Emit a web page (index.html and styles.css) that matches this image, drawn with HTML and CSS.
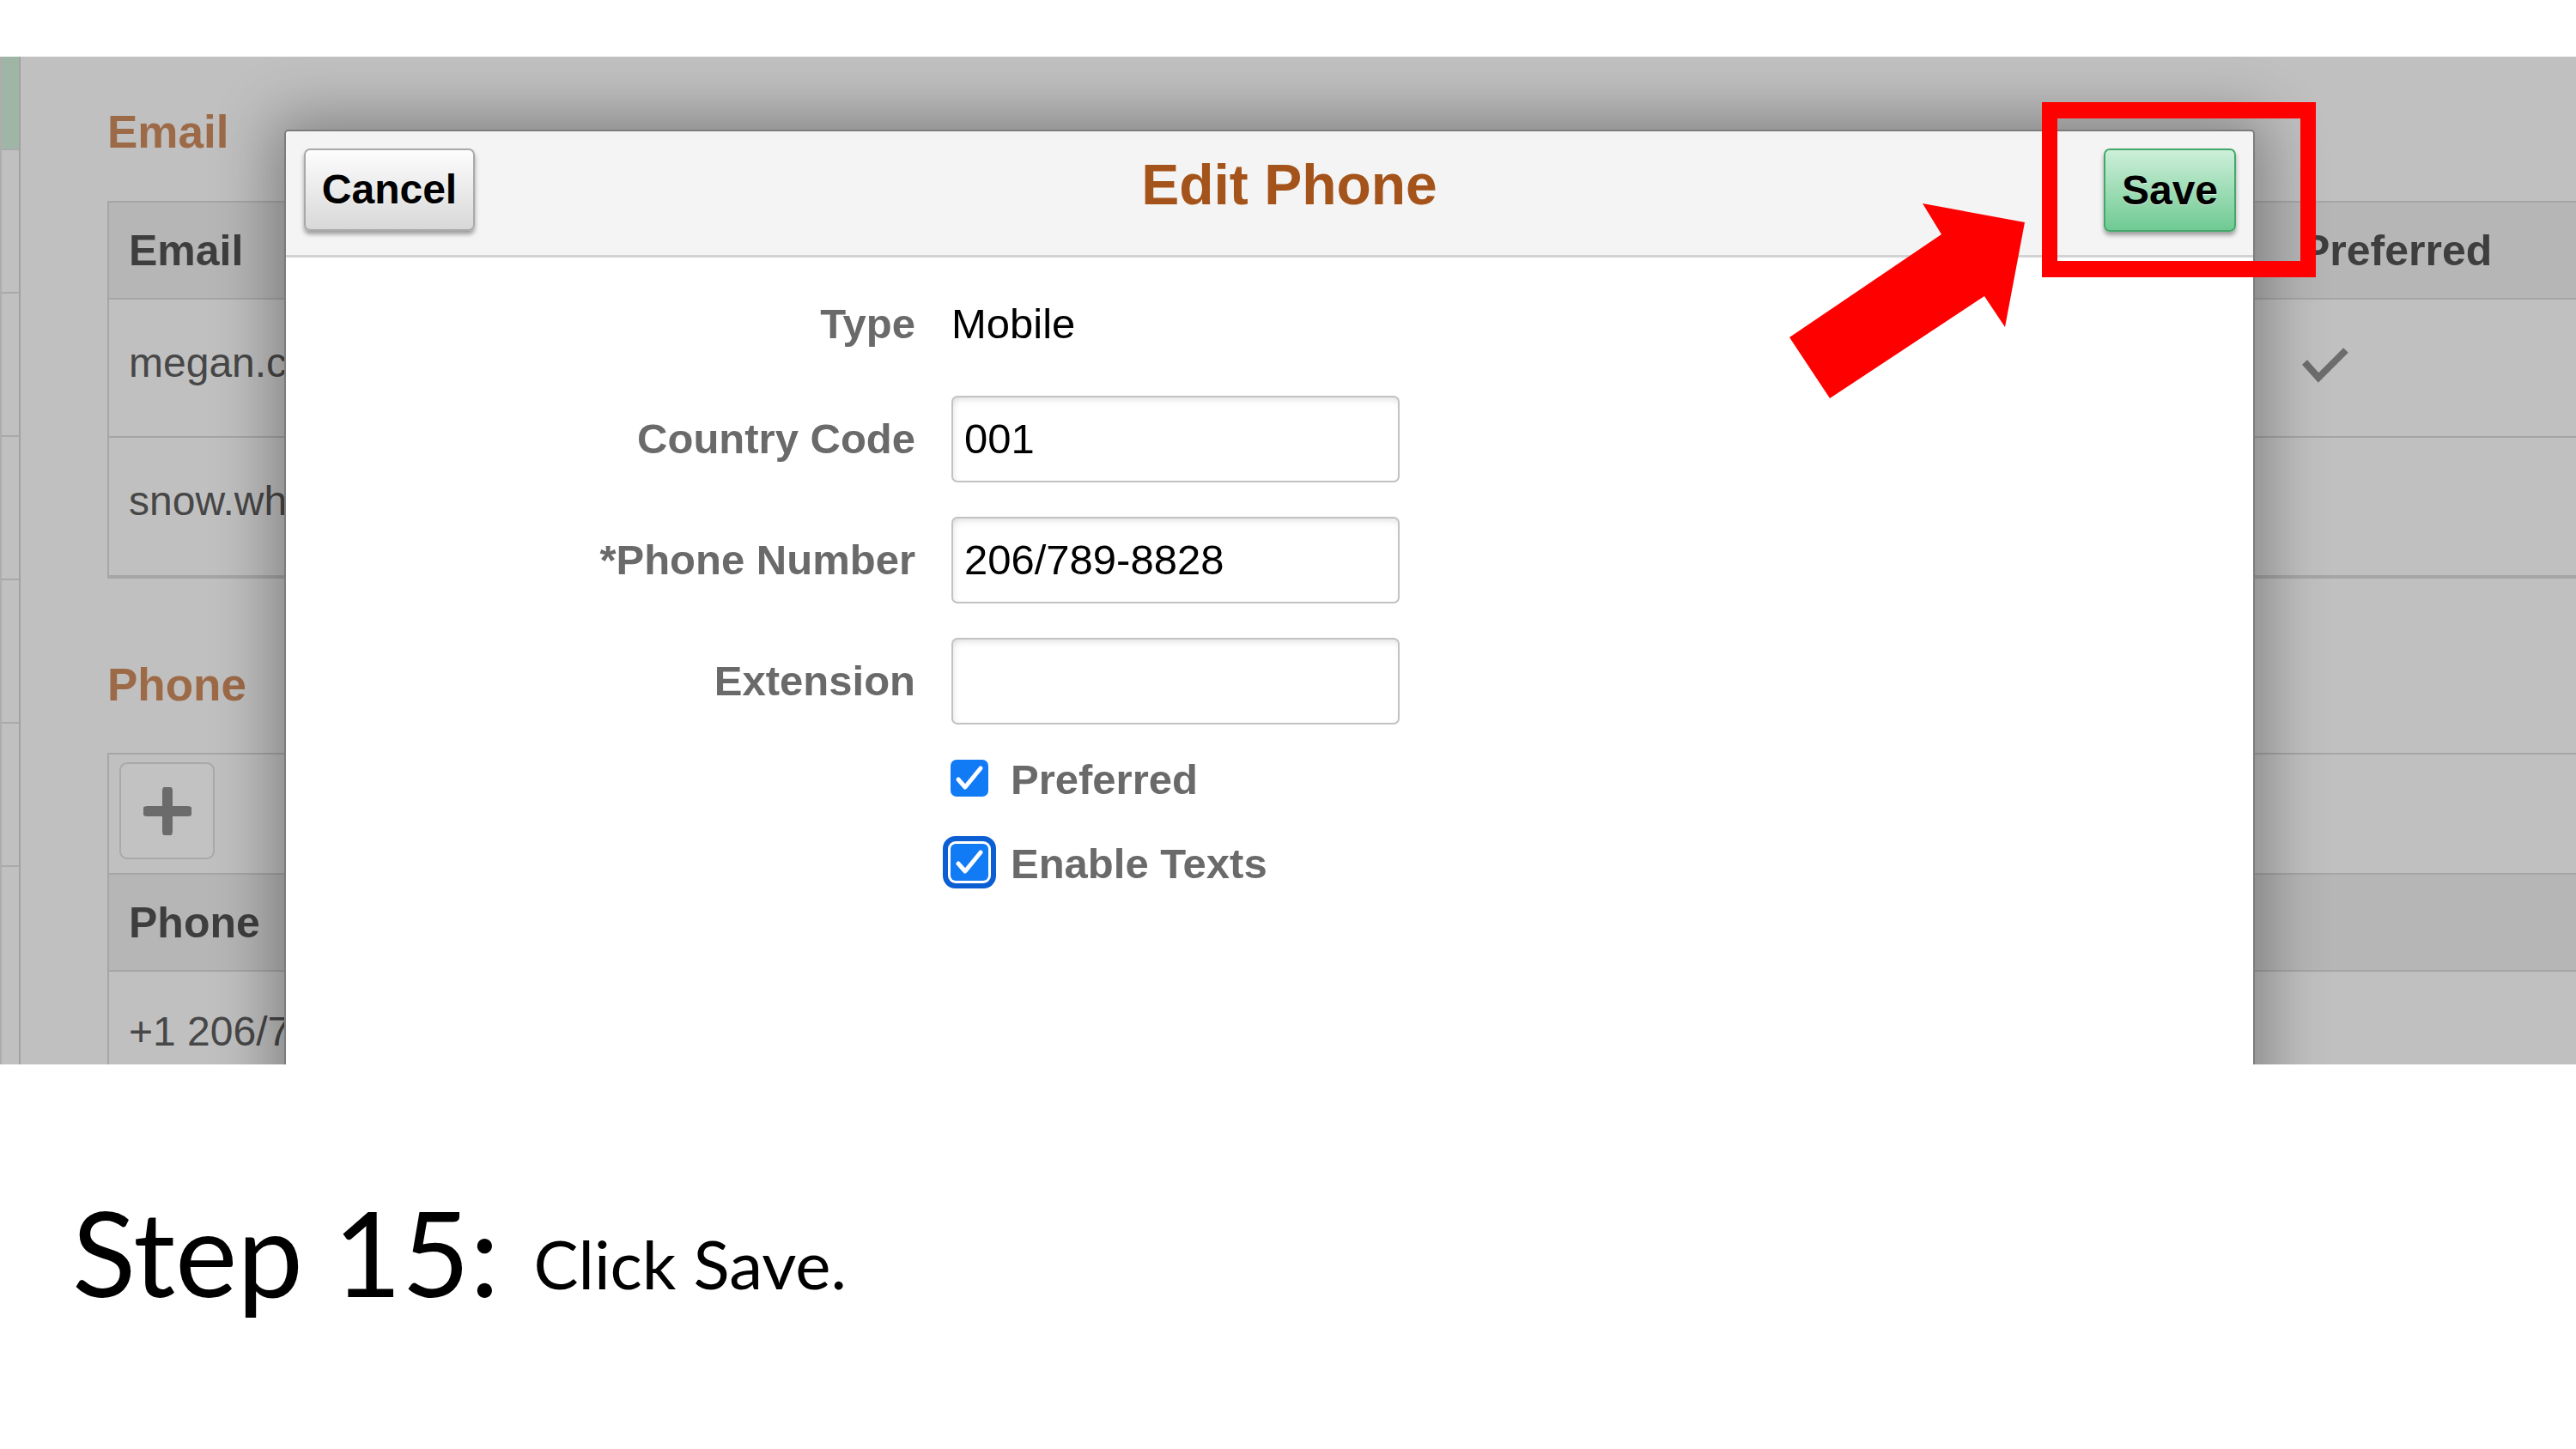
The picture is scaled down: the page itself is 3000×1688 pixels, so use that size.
FILE: index.html
```html
<!DOCTYPE html>
<html lang="en">
<head>
<meta charset="utf-8">
<title>Step 15: Click Save.</title>
<link rel="stylesheet" href="styles.css">
</head>
<body>
<div class="slide">
  <div class="shot">
    <div class="page">
      <div class="nav">
        <div class="nav-cell nav-active"></div>
        <div class="nav-cell"></div>
        <div class="nav-cell"></div>
        <div class="nav-cell"></div>
        <div class="nav-cell"></div>
        <div class="nav-cell"></div>
      </div>
      <div class="content">
        <h2 class="sec-title">Email</h2>
        <div class="table email-table">
          <div class="tr th"><div class="td c1">Email</div><div class="td cpref">Preferred</div></div>
          <div class="tr row"><div class="td c1">megan.cooper@example.com</div><div class="td cpref"><svg class="pref-check" width="54" height="42" viewBox="0 0 54 42"><polyline points="3,18 19,36 51,4" fill="none" stroke="#6d6d6d" stroke-width="8"/></svg></div></div>
          <div class="tr row"><div class="td c1">snow.white@example.com</div><div class="td cpref"></div></div>
        </div>
        <h2 class="sec-title phone-title">Phone</h2>
        <div class="table phone-table">
          <div class="tr toolbar">
            <div class="add-btn"><svg width="56" height="56" viewBox="0 0 56 56"><path d="M28 4 V52 M4 28 H52" stroke="#6b6b6b" stroke-width="12" stroke-linecap="round"/></svg></div>
          </div>
          <div class="tr th"><div class="td c1">Phone</div></div>
          <div class="tr row row-last"><div class="td c1">+1 206/789-8828</div></div>
        </div>
      </div>
    </div>

    <div class="modal">
      <div class="modal-head">
        <button class="btn btn-cancel">Cancel</button>
        <h1 class="modal-title">Edit Phone</h1>
        <button class="btn btn-save">Save</button>
      </div>
      <div class="modal-body">
        <div class="frow frow-type">
          <div class="flabel">Type</div>
          <div class="fvalue">Mobile</div>
        </div>
        <div class="frow frow-input frow-cc">
          <div class="flabel">Country Code</div>
          <div class="finput">001</div>
        </div>
        <div class="frow frow-input frow-gap">
          <div class="flabel">*Phone Number</div>
          <div class="finput">206/789-8828</div>
        </div>
        <div class="frow frow-input frow-gap">
          <div class="flabel">Extension</div>
          <div class="finput"></div>
        </div>
        <div class="frow frow-check frow-check1">
          <div class="flabel"></div>
          <div class="fcheck">
            <span class="cbox"><svg width="44" height="43" viewBox="0 0 44 43"><polyline points="9,23 17,32 35,10" fill="none" stroke="#fff" stroke-width="5" stroke-linecap="round" stroke-linejoin="round"/></svg></span>
            <span class="clabel">Preferred</span>
          </div>
        </div>
        <div class="frow frow-check frow-check2">
          <div class="flabel"></div>
          <div class="fcheck">
            <span class="cbox cbox-focus"><svg width="44" height="43" viewBox="0 0 44 43"><polyline points="9,23 17,32 35,10" fill="none" stroke="#fff" stroke-width="5" stroke-linecap="round" stroke-linejoin="round"/></svg></span>
            <span class="clabel">Enable Texts</span>
          </div>
        </div>
      </div>
    </div>

    <div class="callout-box"></div>
    <svg class="callout-arrow" width="300" height="250" viewBox="2070 160 300 250">
      <polygon points="2358,193 2335,315 2311,279 2131,398 2084,327 2261,207 2239,171" fill="#ff0000"/>
    </svg>
  </div>

  <div class="caption">
    <span class="step">Step 15:</span><span class="instr">Click Save.</span>
  </div>
</div>
</body>
</html>
```

FILE: styles.css
```css
html, body {
  margin: 0;
  padding: 0;
  background: #ffffff;
}

.slide {
  width: 3000px;
  height: 1688px;
  padding-top: 66px;
  box-sizing: border-box;
  background: #ffffff;
  overflow: hidden;
}

/* ---------- screenshot area ---------- */
.shot {
  position: relative;
  height: 1174px;
  background: #c0c0c0;
  overflow: hidden;
  font-family: "Liberation Sans", Arial, sans-serif;
}

.page {
  display: flex;
  height: 100%;
}

.nav {
  flex: 0 0 24px;
  box-sizing: border-box;
  border-left: 2px solid #adadad;
  border-right: 2px solid #a2a2a2;
  background: #c0c0c0;
}

.nav-cell {
  height: 165px;
  border-bottom: 2px solid #a9a9a9;
}

.nav-active {
  height: 107px;
  background: #9fb6a7;
}

.content {
  flex: 1;
  padding-left: 101px;
  padding-top: 61px;
  min-width: 0;
}

.sec-title {
  margin: 0;
  font-size: 53px;
  line-height: 53px;
  font-weight: bold;
  color: #9d6a48;
}

.phone-title {
  margin-top: 97px;
}

.table {
  width: 2895px;
  margin-top: 54px;
  border: 2px solid #a6a6a6;
  border-bottom-width: 4px;
}

.phone-table {
  margin-top: 53px;
}

.tr {
  display: flex;
  align-items: center;
  border-bottom: 2px solid #a6a6a6;
}

.th {
  height: 111px;
  background: #b6b6b6;
  font-size: 50px;
  font-weight: bold;
  color: #3e3e3e;
}

.row {
  height: 147px;
  padding-bottom: 12px;
  font-size: 48px;
  color: #474747;
}

.email-table .row:last-child {
  height: 148px;
  border-bottom: 0;
}

.row-last {
  height: 140px;
  padding-bottom: 32px;
  border-bottom: 0;
}

.td {
  line-height: 1;
  white-space: nowrap;
}

.c1 {
  flex: 1;
  padding-left: 23px;
}

.cpref {
  flex: 0 0 342px;
  display: flex;
  align-items: center;
}

.pref-check {
  margin-left: 1px;
  margin-top: 4px;
}

.toolbar {
  height: 138px;
  align-items: flex-start;
  padding-left: 12px;
  box-sizing: content-box;
}

.add-btn {
  margin-top: 9px;
  width: 111px;
  height: 113px;
  box-sizing: border-box;
  border: 2px solid #a9a9a9;
  border-radius: 9px;
  background: #c2c2c2;
  display: flex;
  align-items: center;
  justify-content: center;
}

/* ---------- modal ---------- */
.modal {
  position: absolute;
  left: 331px;
  top: 85px;
  width: 2295px;
  height: 1200px;
  box-sizing: border-box;
  border: 2px solid #7c7c7c;
  border-bottom: 0;
  border-radius: 5px 5px 0 0;
  background: #ffffff;
  box-shadow: 0 0 70px 14px rgba(0, 0, 0, 0.32);
}

.modal-head {
  background: #f4f4f4;
  border-bottom: 3px solid #d3d3d3;
  border-radius: 4px 4px 0 0;
  display: flex;
  align-items: flex-start;
  padding: 20px 20px 0 21px;
  box-sizing: border-box;
  height: 147px;
}

.btn {
  font-family: "Liberation Sans", Arial, sans-serif;
  font-weight: bold;
  font-size: 48px;
  line-height: 1;
  color: #000;
  border-radius: 7px;
  box-shadow: 0 4px 5px rgba(0, 0, 0, 0.35);
  text-shadow: 0 1px 0 rgba(255, 255, 255, 0.7);
  padding: 0;
  cursor: pointer;
  display: flex;
  align-items: center;
  justify-content: center;
}

.btn-cancel {
  width: 199px;
  height: 96px;
  border: 2px solid #a9a9a9;
  background: linear-gradient(#fdfdfd, #d8d8d8);
}

.btn-save {
  width: 154px;
  height: 97px;
  border: 2px solid #45a86b;
  background: linear-gradient(#cdefd9, #6fca92);
}

.modal-title {
  flex: 1;
  margin: 9px 0 0 0;
  text-align: center;
  font-size: 66px;
  line-height: 66px;
  font-weight: bold;
  color: #a4531a;
}

.modal-body {
  padding-top: 47px;
}

.frow {
  display: flex;
  align-items: center;
}

.flabel {
  flex: 0 0 733px;
  text-align: right;
  font-size: 49px;
  line-height: 1;
  font-weight: bold;
  color: #6a6a6a;
}

.fvalue {
  margin-left: 42px;
  font-size: 49px;
  line-height: 1;
  color: #000;
}

.frow-type {
  height: 60px;
}

.frow-input {
  height: 101px;
}

.frow-cc {
  margin-top: 54px;
}

.frow-gap {
  margin-top: 40px;
}

.finput {
  margin-left: 42px;
  width: 522px;
  height: 101px;
  box-sizing: border-box;
  border: 2px solid #c2c2c2;
  border-radius: 7px;
  background: #fff;
  box-shadow: inset 0 7px 8px -5px rgba(0, 0, 0, 0.13), inset 7px 0 8px -6px rgba(0, 0, 0, 0.08);
  padding-left: 13px;
  display: flex;
  align-items: center;
  font-size: 49px;
  line-height: 1;
  color: #000;
}

.frow-check {
  height: 44px;
}

.frow-check1 {
  margin-top: 40px;
}

.frow-check2 {
  margin-top: 54px;
}

.fcheck {
  margin-left: 41px;
  display: flex;
  align-items: center;
}

.cbox {
  width: 44px;
  height: 43px;
  border-radius: 7px;
  background: #117bf6;
  display: flex;
}

.cbox-focus {
  box-shadow: 0 0 0 3px #ffffff, 0 0 0 9px #0b5fd3;
  border-radius: 6px;
}

.clabel {
  margin-left: 26px;
  font-size: 49px;
  line-height: 1;
  font-weight: bold;
  color: #6a6a6a;
  padding-top: 4px;
}

/* ---------- annotations ---------- */
.callout-box {
  position: absolute;
  left: 2378px;
  top: 53px;
  width: 319px;
  height: 204px;
  box-sizing: border-box;
  border-style: solid;
  border-color: #ff0000;
  border-width: 19px 18px;
}

.callout-arrow {
  position: absolute;
  left: 2070px;
  top: 160px;
}

/* ---------- caption ---------- */
.caption {
  padding-left: 84px;
  padding-top: 150px;
  font-family: Lato, "Open Sans", sans-serif;
  color: #000;
  white-space: nowrap;
}

.step {
  font-size: 137px;
  line-height: 1;
}

.instr {
  margin-left: 40px;
  font-size: 78px;
  line-height: 1;
  vertical-align: 9px;
}
```
